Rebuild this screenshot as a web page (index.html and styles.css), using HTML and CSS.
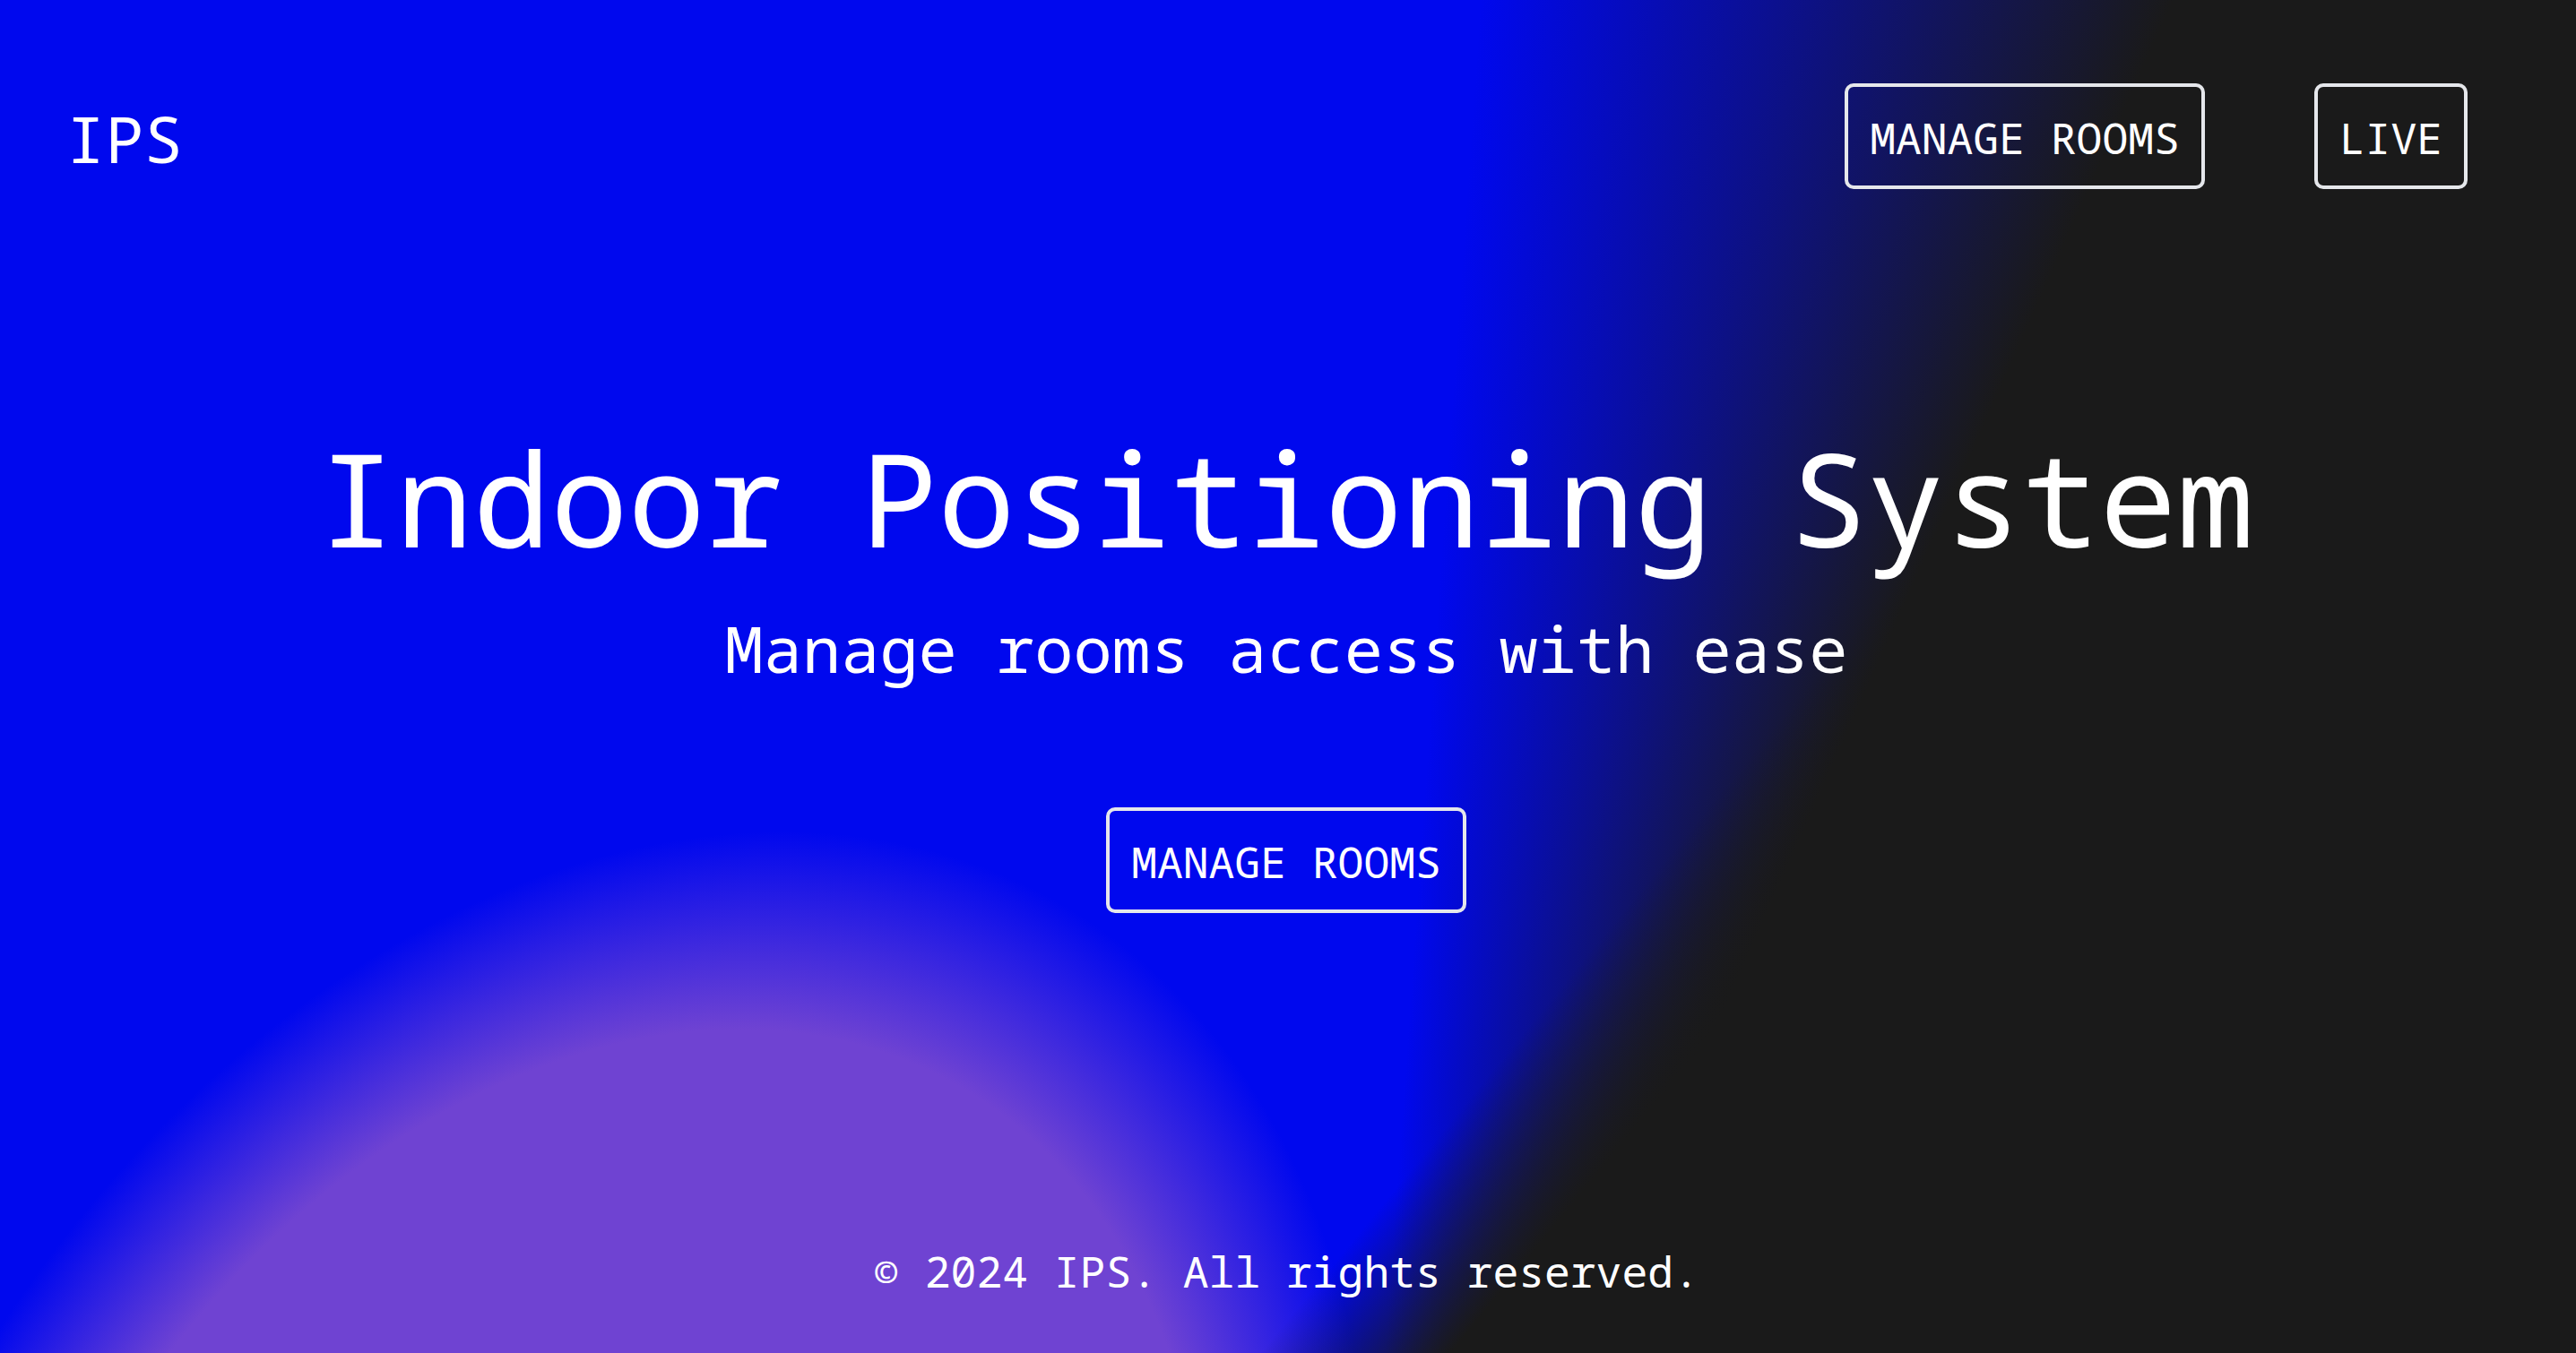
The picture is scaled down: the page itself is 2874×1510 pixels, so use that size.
FILE: index.html
```html
<!DOCTYPE html>
<html lang="en">
<head>
<meta charset="utf-8">
<title>IPS</title>
<link rel="stylesheet" href="styles.css">
</head>
<body>
<div class="page">
  <header class="topbar">
    <div class="logo">IPS</div>
    <nav class="nav">
      <a class="btn" href="#">MANAGE ROOMS</a>
      <a class="btn" href="#">LIVE</a>
    </nav>
  </header>
  <main class="hero">
    <h1 class="title">Indoor Positioning System</h1>
    <p class="subtitle">Manage rooms access with ease</p>
    <a class="btn" href="#">MANAGE ROOMS</a>
  </main>
  <footer class="footer">© 2024 IPS. All rights reserved.</footer>
</div>
</body>
</html>
```

FILE: styles.css
```css
html, body {
  margin: 0;
  padding: 0;
  height: 100%;
}

body {
  font-family: "Noto Sans Mono", "DejaVu Sans Mono", monospace;
  color: #ffffff;
  overflow: hidden;
}

.page {
  position: relative;
  overflow: hidden;
  min-height: 100vh;
  box-sizing: border-box;
  display: flex;
  flex-direction: column;
  background: #0008ee;
}

/* purple glow, tilted ellipse behind the content */
.page::before {
  content: "";
  position: absolute;
  left: -165px;
  top: 869px;
  width: 1620px;
  height: 2222px;
  transform: rotate(28deg);
  background: radial-gradient(ellipse closest-side, #6f43d2 0%, #6f43d2 79%, rgba(111, 67, 210, 0) 100%);
  pointer-events: none;
}

/* dark area on the right */
.page::after {
  content: "";
  position: absolute;
  inset: 0;
  background:
    linear-gradient(129.4deg, rgba(26, 26, 26, 0) 2045px, #1a1a1a 2209px),
    conic-gradient(from -90deg at 1507px 2062px, rgba(26, 26, 26, 0) 0deg, rgba(26, 26, 26, 0) 94deg, #1a1a1a 114deg, #1a1a1a 360deg);
  pointer-events: none;
}

.topbar,
.hero,
.footer {
  position: relative;
  z-index: 1;
}

.topbar {
  display: flex;
  justify-content: space-between;
  align-items: flex-start;
  padding: 93px 121px 0 74px;
}

.logo {
  font-size: 72px;
  line-height: 98px;
  margin-top: 12px;
}

.nav {
  display: flex;
  gap: 122px;
}

.btn {
  display: inline-block;
  font-size: 48px;
  line-height: 65px;
  padding: 24px 24px 21px;
  border: 4px solid #e5e7eb;
  border-radius: 10px;
  color: #ffffff;
  text-decoration: none;
}

.hero {
  flex: 1;
  display: flex;
  flex-direction: column;
  align-items: center;
  text-align: center;
  padding-top: 246px;
  padding-right: 4px;
}

.title {
  margin: 0;
  font-size: 144px;
  line-height: 196px;
  font-weight: normal;
}

.subtitle {
  margin: 21px 0 129px;
  font-size: 72px;
  line-height: 98px;
}

.footer {
  text-align: center;
  font-size: 48px;
  line-height: 65px;
  padding-bottom: 59px;
  padding-right: 4px;
}
```
